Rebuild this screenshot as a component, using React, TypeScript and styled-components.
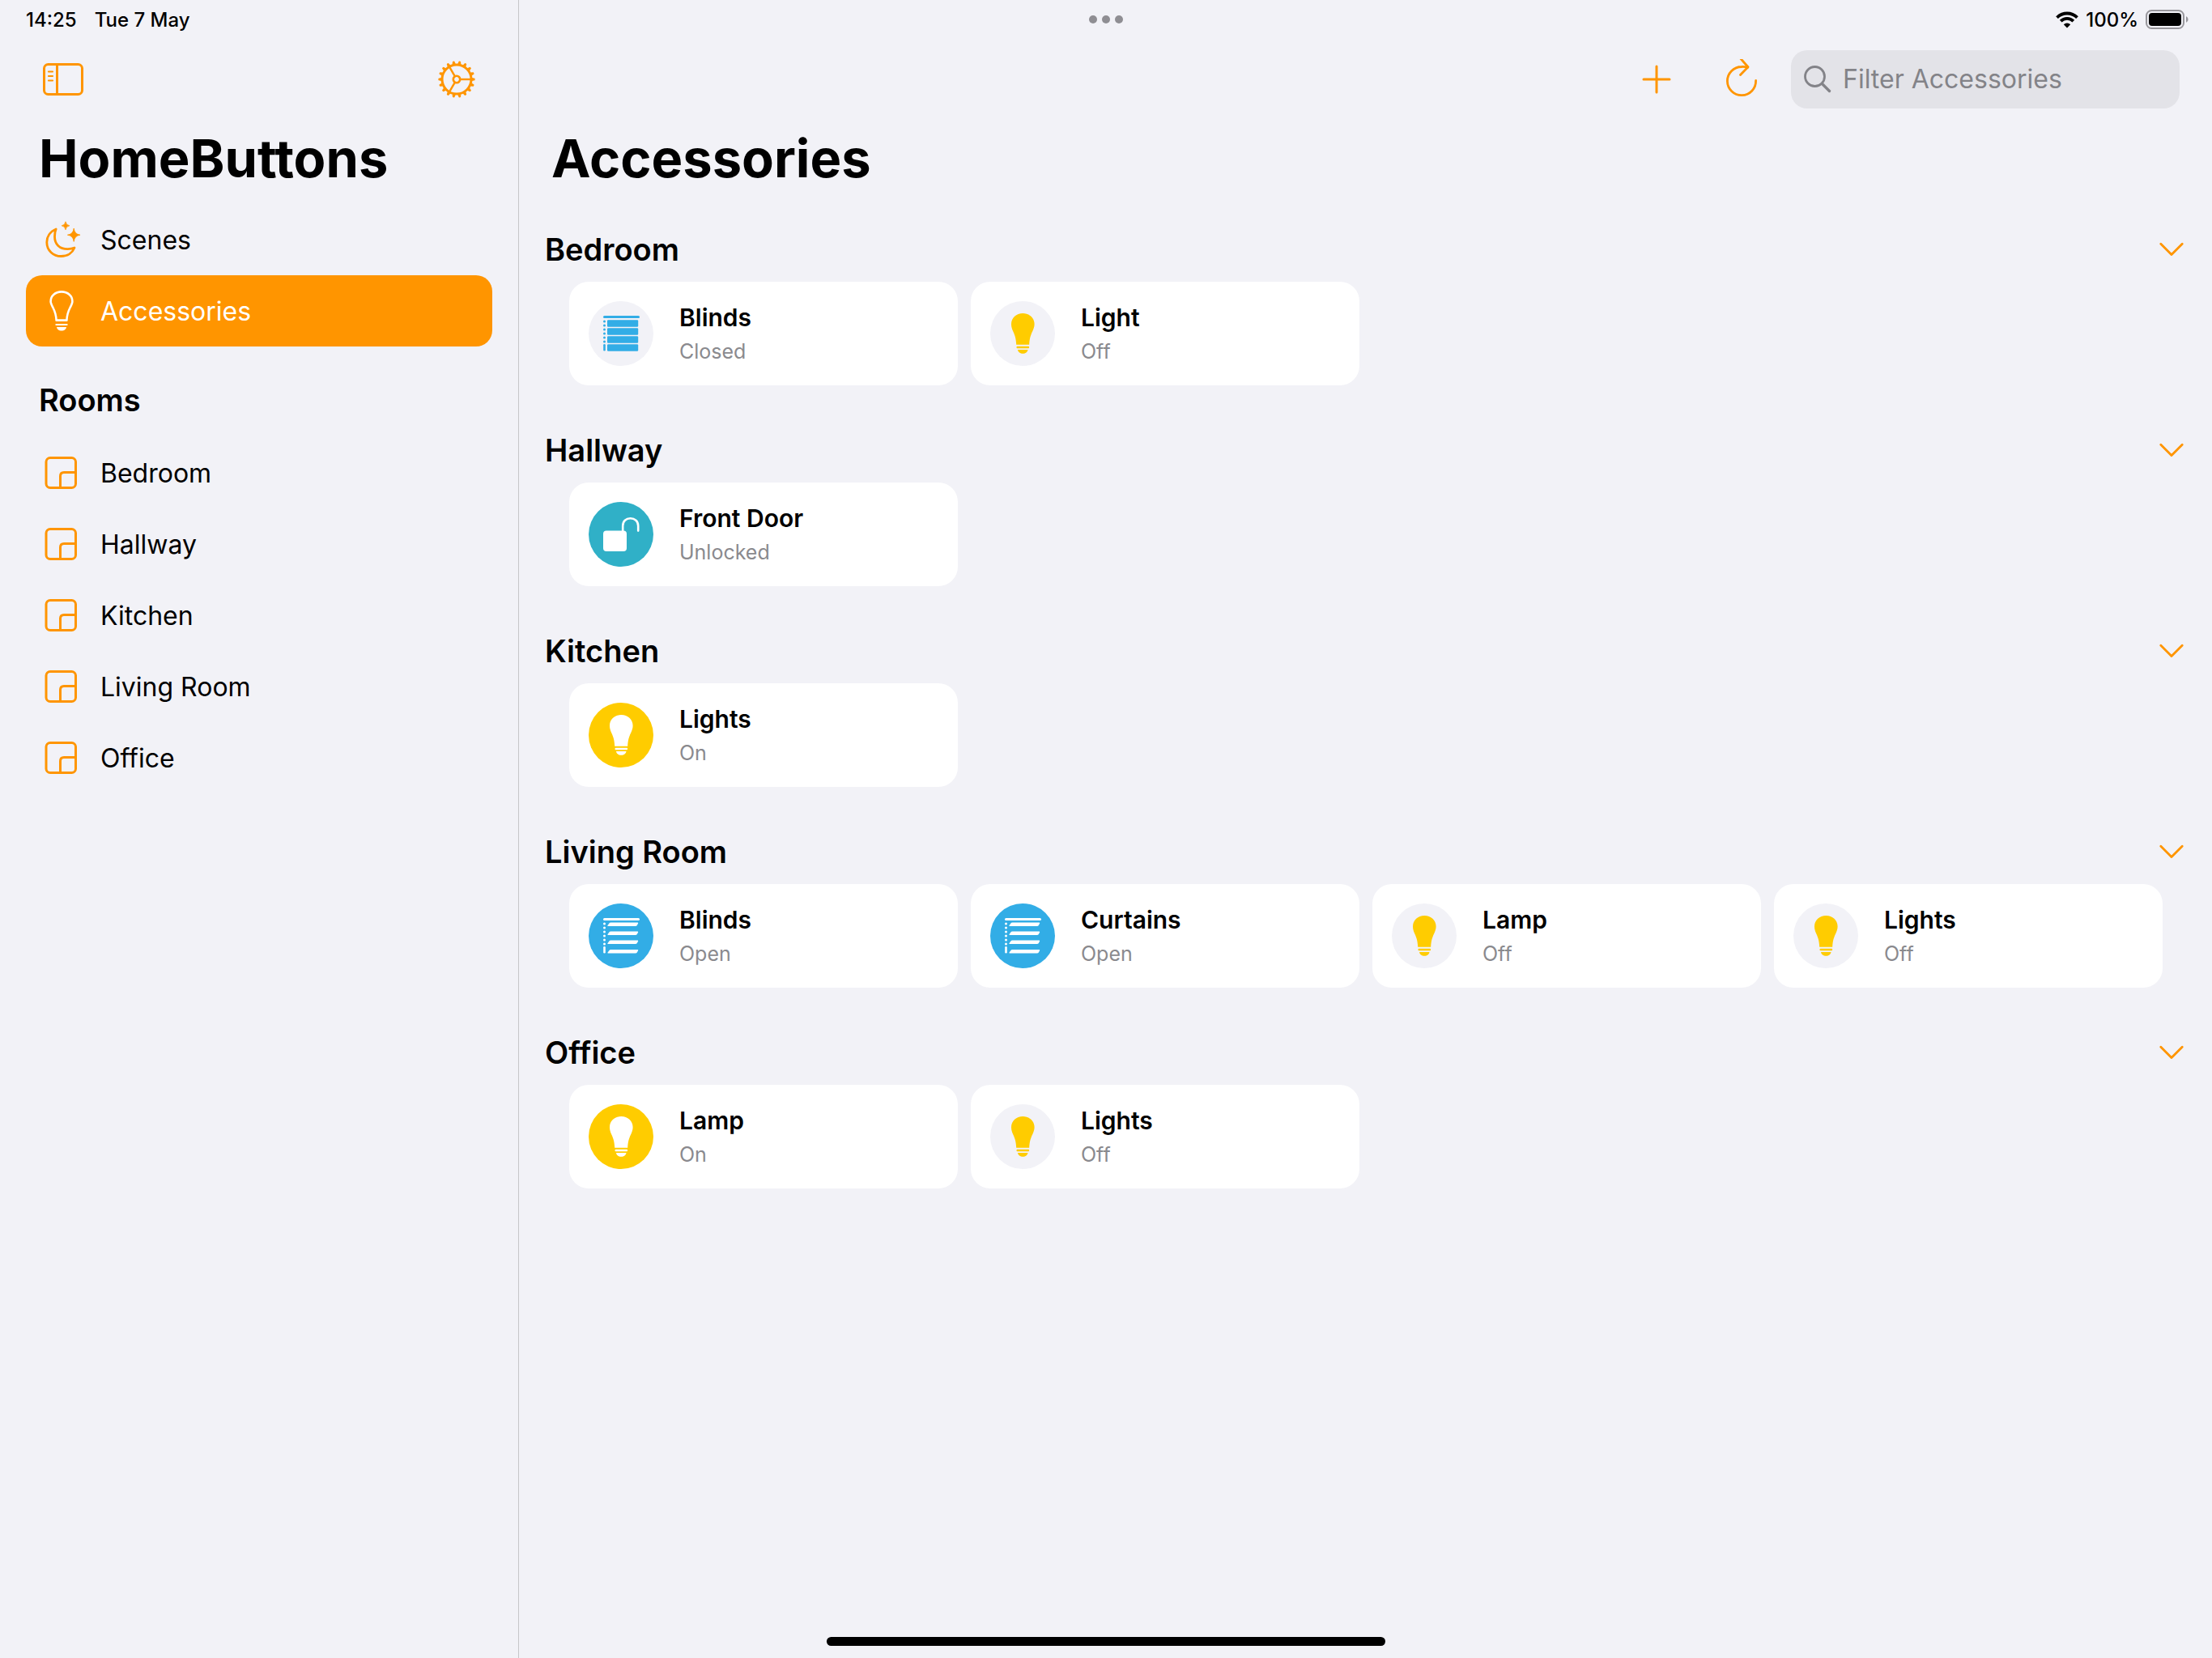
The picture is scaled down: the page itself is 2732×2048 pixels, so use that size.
import React, { useState } from "react";
import styled, { createGlobalStyle } from "styled-components";

const colors = {
  accent: "#ff9500",
  background: "#f2f2f7",
  card: "#ffffff",
  text: "#000000",
  secondary: "#8a8a8e",
  field: "#e3e3e8",
  placeholder: "#838388",
  divider: "#c6c6c9",
  yellow: "#ffcc00",
  blue: "#32ade6",
  teal: "#30b0c7",
};

const GlobalStyle = createGlobalStyle`
  *, *::before, *::after { box-sizing: border-box; }
  body {
    margin: 0;
    background: ${colors.background};
    color: ${colors.text};
    font-family: Inter, "Liberation Sans", sans-serif;
  }
  h1, h2, p, ul { margin: 0; padding: 0; }
  ul { list-style: none; }
  button, input { font: inherit; color: inherit; }
  svg { display: block; flex: none; }
`;

const Screen = styled.div`
  position: relative;
  display: flex;
  min-height: 100vh;
`;

const Sidebar = styled.aside`
  flex: none;
  width: 641px;
  border-right: 1px solid ${colors.divider};
`;

const Main = styled.main`
  flex: 1;
  min-width: 0;
`;

const StatusBar = styled.div<{ $end?: boolean }>`
  display: flex;
  align-items: center;
  justify-content: ${(p) => (p.$end ? "flex-end" : "flex-start")};
  height: 48px;
  padding: 0 28px 0 32px;
  font-size: 24px;
  font-weight: 500;
`;

const StatusDate = styled.span`
  margin-left: 22px;
`;

const StatusLevel = styled.span`
  margin: 0 9px;
`;

const Multitasking = styled.div`
  position: absolute;
  top: 19px;
  left: 50%;
  display: flex;
  gap: 6px;
  transform: translateX(-50%);
`;

const Dot = styled.span`
  width: 10px;
  height: 10px;
  border-radius: 50%;
  background: #8f8e93;
`;

const HomeIndicator = styled.div`
  position: absolute;
  bottom: 15px;
  left: 50%;
  width: 690px;
  height: 11px;
  border-radius: 6px;
  background: #000;
  transform: translateX(-50%);
`;

const Toolbar = styled.div<{ $end?: boolean }>`
  display: flex;
  align-items: center;
  justify-content: ${(p) => (p.$end ? "flex-end" : "space-between")};
  height: 100px;
  padding: 0 40px 0 42px;
`;

const IconButton = styled.button`
  display: flex;
  align-items: center;
  justify-content: center;
  width: 72px;
  height: 72px;
  padding: 0;
  border: 0;
  background: none;
  color: ${colors.accent};
  cursor: pointer;
`;

const Actions = styled.div`
  display: flex;
  gap: 33px;
  margin-right: 25px;
`;

const SearchField = styled.label`
  display: flex;
  align-items: center;
  gap: 14px;
  width: 480px;
  height: 72px;
  padding: 0 16px;
  border-radius: 20px;
  background: ${colors.field};
  color: ${colors.placeholder};
`;

const SearchInput = styled.input`
  flex: 1;
  min-width: 0;
  padding: 0;
  border: 0;
  outline: 0;
  background: none;
  color: ${colors.text};
  font-size: 32px;
  line-height: 44px;
  &::placeholder {
    color: ${colors.placeholder};
    opacity: 1;
  }
`;

const PageTitle = styled.h1`
  padding: 0 40px 0 48px;
  font-size: 65px;
  font-weight: 700;
  line-height: 96px;
`;

const MainTitle = styled(PageTitle)`
  padding-left: 40px;
  margin-bottom: 24px;
`;

const Nav = styled.nav`
  padding: 8px 32px 0;
`;

const NavHeading = styled.h2`
  margin-top: 20px;
  padding-left: 16px;
  font-size: 38px;
  font-weight: 600;
  line-height: 92px;
`;

const NavLink = styled.a<{ $active?: boolean }>`
  display: flex;
  align-items: center;
  gap: 20px;
  height: 88px;
  padding: 0 16px;
  border-radius: 20px;
  background: ${(p) => (p.$active ? colors.accent : "transparent")};
  color: ${(p) => (p.$active ? "#fff" : colors.text)};
  font-size: 32px;
  text-decoration: none;
`;

const NavIcon = styled.span<{ $active?: boolean }>`
  display: flex;
  justify-content: center;
  width: 56px;
  color: ${(p) => (p.$active ? "#fff" : colors.accent)};
`;

const Section = styled.section`
  padding: 0 32px;
  margin-bottom: 40px;
`;

const SectionHeader = styled.div`
  display: flex;
  align-items: center;
  justify-content: space-between;
  height: 80px;
`;

const SectionTitle = styled.h2`
  font-size: 38px;
  font-weight: 600;
  line-height: 48px;
`;

const Disclosure = styled(IconButton)<{ $open: boolean }>`
  width: 36px;
  svg {
    transform: ${(p) => (p.$open ? "none" : "rotate(-90deg)")};
  }
`;

const Grid = styled.ul`
  display: grid;
  grid-template-columns: repeat(auto-fill, minmax(420px, 1fr));
  gap: 16px;
  padding: 0 29px 0 30px;
`;

const Card = styled.button`
  display: flex;
  align-items: center;
  gap: 32px;
  width: 100%;
  height: 128px;
  padding: 0 24px;
  border: 0;
  border-radius: 24px;
  background: ${colors.card};
  text-align: left;
  cursor: pointer;
`;

const Badge = styled.span<{ $fill: string; $ink: string }>`
  flex: none;
  width: 80px;
  height: 80px;
  border-radius: 50%;
  background: ${(p) => p.$fill};
  color: ${(p) => p.$ink};
`;

const CardText = styled.span`
  display: flex;
  flex-direction: column;
  gap: 6px;
  padding-top: 2px;
`;

const CardName = styled.span`
  font-size: 30px;
  font-weight: 600;
  line-height: 36px;
`;

const CardState = styled.span`
  color: ${colors.secondary};
  font-size: 25px;
  line-height: 36px;
`;

const SidebarIcon = () => (
  <svg width="52" height="42" viewBox="0 0 52 42" fill="none" stroke="currentColor" strokeWidth="3">
    <rect x="2.5" y="2.5" width="47" height="37" rx="5" />
    <path d="M18.5 2.5v37" />
    <path d="M8 11.5h5M8 17h5M8 22.5h5" strokeWidth="2.2" strokeLinecap="round" />
  </svg>
);

const GearIcon = () => (
  <svg width="46" height="46" viewBox="-23 -23 46 46" fill="none" stroke="currentColor" strokeWidth="2.4">
    <circle r="18" strokeWidth="3" />
    <circle r="4.2" strokeWidth="2.6" />
    {[0, 120, 240].map((a) => (
      <path key={a} d="M4.5 0H17" transform={`rotate(${a})`} />
    ))}
    {Array.from({ length: 18 }, (_, i) => (
      <path
        key={i}
        d="M19 -2.1L22.4 -1.2Q23 0 22.4 1.2L19 2.1Z"
        fill="currentColor"
        stroke="none"
        transform={`rotate(${i * 20})`}
      />
    ))}
  </svg>
);

const MoonIcon = () => (
  <svg width="48" height="46" viewBox="-4 0 48 46" fill="none" stroke="currentColor">
    <path
      d="M13.2 10C5.6 13.2 1.8 19.8 1.8 26.2C1.8 36.4 9.8 43.5 19.5 43.5C27.5 43.5 33.5 39.2 36 33C33.5 34.2 30.5 34.6 27.5 34.6C17.5 34.6 11.5 28.6 11.5 19.2C11.5 15.8 12 12.6 13.2 10Z"
      strokeWidth="2.8"
      strokeLinejoin="round"
    />
    <path
      d="M35.2 9Q36 16.3 43 17.2Q36 18.1 35.2 25.4Q34.4 18.1 27.4 17.2Q34.4 16.3 35.2 9ZM25 0.8Q25.5 5.1 29.8 5.8Q25.5 6.5 25 10.8Q24.5 6.5 20.2 5.8Q24.5 5.1 25 0.8Z"
      fill="currentColor"
      strokeWidth="0.8"
      strokeLinejoin="round"
    />
  </svg>
);

const BulbOutlineIcon = () => (
  <svg width="30" height="50" viewBox="0 0 30 50" fill="none" stroke="currentColor">
    <path
      d="M8.6 36.6C8.3 28.5 6.8 25.5 4.2 20.5C2.6 17.4 1.6 15.5 1.6 13.2C1.6 6.6 7.4 1.4 15 1.4S28.4 6.6 28.4 13.2C28.4 15.5 27.4 17.4 25.8 20.5C23.2 25.5 21.7 28.5 21.4 36.6Z"
      strokeWidth="2.6"
      strokeLinejoin="round"
    />
    <path d="M8.3 42H21.7" strokeWidth="2" strokeLinecap="round" />
    <path d="M9 45H21C20.6 47.8 18 49.6 15 49.6S9.4 47.8 9 45Z" fill="currentColor" stroke="none" />
  </svg>
);

const RoomIcon = () => (
  <svg width="42" height="42" viewBox="0 0 42 42" fill="none" stroke="currentColor" strokeWidth="3">
    <rect x="2" y="2.5" width="36.5" height="37" rx="5" />
    <path d="M38.5 20.5H24Q19.500 20.5 19.5 25V39.5" />
  </svg>
);

const PlusIcon = () => (
  <svg width="36" height="36" viewBox="0 0 36 36" fill="none" stroke="currentColor" strokeWidth="3" strokeLinecap="round">
    <path d="M18 2V34M2 18H34" />
  </svg>
);

const RefreshIcon = () => (
  <svg width="40" height="50" viewBox="0 0 40 50" fill="none" stroke="currentColor" strokeWidth="2.8" strokeLinecap="round" strokeLinejoin="round">
    <path d="M37.6 26.500A17.6 17.6 0 1 1 20 9.500Q24 9.300 27.5 10.300" />
    <path d="M18.5 0.500M18.5 -1L28 9.700L18.5 19.500" />
  </svg>
);

const SearchIcon = () => (
  <svg width="34" height="34" viewBox="0 0 34 34" fill="none" stroke="currentColor" strokeLinecap="round">
    <circle cx="13.5" cy="13.5" r="12" strokeWidth="2.8" />
    <path d="M22.5 22.5L31.5 31.5" strokeWidth="3.4" />
  </svg>
);

const ChevronIcon = () => (
  <svg width="30" height="18" viewBox="0 0 30 18" fill="none" stroke="currentColor" strokeWidth="2.8" strokeLinecap="round" strokeLinejoin="round">
    <path d="M1.8 2.2L15 15.6L28.2 2.2" />
  </svg>
);

const WifiIcon = () => (
  <svg width="28" height="21" viewBox="0 0 28 21" fill="none" stroke="currentColor" strokeWidth="3.8">
    <path d="M1.5 7.7A17.6 17.6 0 0 1 26.5 7.7" />
    <path d="M6.2 12.2A11 11 0 0 1 21.8 12.2" />
    <path d="M14 20.5L9.8 16.3A6 6 0 0 1 18.2 16.3Z" fill="currentColor" stroke="none" />
  </svg>
);

const BatteryIcon = () => (
  <svg width="54" height="24" viewBox="0 0 54 24" fill="none">
    <rect x="1" y="1" width="46" height="22" rx="6.5" stroke="#98979c" strokeWidth="2" />
    <rect x="4" y="4" width="40" height="16" rx="4" fill="#000" />
    <path d="M50 8Q52.6 9.3 52.6 12T50 16Z" fill="#98979c" />
  </svg>
);

const BulbGlyph = () => (
  <svg width="80" height="80" viewBox="0 0 80 80" fill="currentColor">
    <path d="M40.3 15C48.3 15 54.6 20.6 54.6 28.2C54.6 31.5 53.6 34.2 52.2 37.2C49.8 42.3 48.6 46 48.2 53.7H32.2C31.8 46 30.6 42.3 28.2 37.2C26.8 34.2 26 31.5 26 28.2C26 20.6 32.3 15 40.3 15Z" />
    <rect x="32.5" y="55.8" width="15.6" height="2.4" rx="1" />
    <path d="M34 60H46.5C46.1 63 43.5 64.8 40.3 64.8S34.4 63 34 60Z" />
  </svg>
);

const BlindCord = () => (
  <>
    <rect x="18" y="18" width="45" height="3" rx="1.5" />
    {[25, 30, 35, 40, 45, 50].map((y) => (
      <circle key={y} cx="19.5" cy={y} r="1.5" />
    ))}
    <rect x="18.2" y="53" width="2.6" height="8.6" rx="1.3" />
  </>
);

const BlindsClosedGlyph = () => (
  <svg width="80" height="80" viewBox="0 0 80 80" fill="currentColor">
    <BlindCord />
    {[23.2, 33.2, 43.2, 53.2].map((y) => (
      <rect key={y} x="23" y={y} width="38.2" height="8.5" rx="1.2" />
    ))}
  </svg>
);

const BlindsOpenGlyph = () => (
  <svg width="80" height="80" viewBox="0 0 80 80" fill="currentColor">
    <BlindCord />
    {[23.6, 34.5, 45.6, 57].map((y) => (
      <path
        key={y}
        transform={`translate(0 ${y})`}
        d="M27.5 0H60.5Q61.5 0 61.1 1L60 3.2Q59.3 4.5 57.6 4.5H24Q23 4.5 23.6 3.5L25.2 1.2Q26 0 27.5 0Z"
      />
    ))}
  </svg>
);

const UnlockGlyph = () => (
  <svg width="80" height="80" viewBox="0 0 80 80" fill="none">
    <rect x="18" y="35.6" width="29" height="25.4" rx="4" fill="currentColor" />
    <path
      d="M42.2 37V29.5C42.2 23.8 46.2 20.3 51.6 20.3S61.2 23.8 61.2 29.5V35.6"
      stroke="currentColor"
      strokeWidth="2.6"
      strokeLinecap="round"
    />
  </svg>
);

type Kind = "blinds-closed" | "blinds-open" | "light-on" | "light-off" | "unlocked";

const kinds: Record<Kind, { fill: string; ink: string; Glyph: React.FC }> = {
  "blinds-closed": { fill: colors.background, ink: colors.blue, Glyph: BlindsClosedGlyph },
  "blinds-open": { fill: colors.blue, ink: "#fff", Glyph: BlindsOpenGlyph },
  "light-on": { fill: colors.yellow, ink: "#fff", Glyph: BulbGlyph },
  "light-off": { fill: colors.background, ink: colors.yellow, Glyph: BulbGlyph },
  unlocked: { fill: colors.teal, ink: "#fff", Glyph: UnlockGlyph },
};

type Accessory = { name: string; state: string; kind: Kind };

const rooms: { name: string; accessories: Accessory[] }[] = [
  {
    name: "Bedroom",
    accessories: [
      { name: "Blinds", state: "Closed", kind: "blinds-closed" },
      { name: "Light", state: "Off", kind: "light-off" },
    ],
  },
  { name: "Hallway", accessories: [{ name: "Front Door", state: "Unlocked", kind: "unlocked" }] },
  { name: "Kitchen", accessories: [{ name: "Lights", state: "On", kind: "light-on" }] },
  {
    name: "Living Room",
    accessories: [
      { name: "Blinds", state: "Open", kind: "blinds-open" },
      { name: "Curtains", state: "Open", kind: "blinds-open" },
      { name: "Lamp", state: "Off", kind: "light-off" },
      { name: "Lights", state: "Off", kind: "light-off" },
    ],
  },
  {
    name: "Office",
    accessories: [
      { name: "Lamp", state: "On", kind: "light-on" },
      { name: "Lights", state: "Off", kind: "light-off" },
    ],
  },
];

function RoomSection({ name, accessories }: { name: string; accessories: Accessory[] }) {
  const [open, setOpen] = useState(true);
  return (
    <Section>
      <SectionHeader>
        <SectionTitle>{name}</SectionTitle>
        <Disclosure $open={open} aria-expanded={open} aria-label={`Toggle ${name}`} onClick={() => setOpen(!open)}>
          <ChevronIcon />
        </Disclosure>
      </SectionHeader>
      {open && (
        <Grid>
          {accessories.map((item) => {
            const { fill, ink, Glyph } = kinds[item.kind];
            return (
              <li key={item.name}>
                <Card>
                  <Badge $fill={fill} $ink={ink}>
                    <Glyph />
                  </Badge>
                  <CardText>
                    <CardName>{item.name}</CardName>
                    <CardState>{item.state}</CardState>
                  </CardText>
                </Card>
              </li>
            );
          })}
        </Grid>
      )}
    </Section>
  );
}

export default function App() {
  const [filter, setFilter] = useState("");
  const query = filter.trim().toLowerCase();
  const visible = rooms
    .map((room) => ({
      ...room,
      accessories: room.accessories.filter((a) => a.name.toLowerCase().includes(query)),
    }))
    .filter((room) => room.accessories.length > 0);

  return (
    <>
      <GlobalStyle />
      <Screen>
        <Sidebar>
          <StatusBar>
            <span>14:25</span>
            <StatusDate>Tue 7 May</StatusDate>
          </StatusBar>
          <Toolbar>
            <IconButton aria-label="Toggle sidebar">
              <SidebarIcon />
            </IconButton>
            <IconButton aria-label="Settings">
              <GearIcon />
            </IconButton>
          </Toolbar>
          <PageTitle>HomeButtons</PageTitle>
          <Nav>
            <NavLink href="#scenes">
              <NavIcon>
                <MoonIcon />
              </NavIcon>
              Scenes
            </NavLink>
            <NavLink href="#accessories" $active aria-current="page">
              <NavIcon $active>
                <BulbOutlineIcon />
              </NavIcon>
              Accessories
            </NavLink>
            <NavHeading>Rooms</NavHeading>
            {rooms.map((room) => (
              <NavLink key={room.name} href={`#${room.name}`}>
                <NavIcon>
                  <RoomIcon />
                </NavIcon>
                {room.name}
              </NavLink>
            ))}
          </Nav>
        </Sidebar>
        <Main>
          <StatusBar $end>
            <WifiIcon />
            <StatusLevel>100%</StatusLevel>
            <BatteryIcon />
          </StatusBar>
          <Toolbar $end>
            <Actions>
              <IconButton aria-label="Add accessory">
                <PlusIcon />
              </IconButton>
              <IconButton aria-label="Refresh">
                <RefreshIcon />
              </IconButton>
            </Actions>
            <SearchField>
              <SearchIcon />
              <SearchInput
                type="text"
                placeholder="Filter Accessories"
                aria-label="Filter Accessories"
                value={filter}
                onChange={(e) => setFilter(e.target.value)}
              />
            </SearchField>
          </Toolbar>
          <MainTitle>Accessories</MainTitle>
          {visible.map((room) => (
            <RoomSection key={room.name} name={room.name} accessories={room.accessories} />
          ))}
        </Main>
        <Multitasking>
          <Dot />
          <Dot />
          <Dot />
        </Multitasking>
        <HomeIndicator />
      </Screen>
    </>
  );
}
